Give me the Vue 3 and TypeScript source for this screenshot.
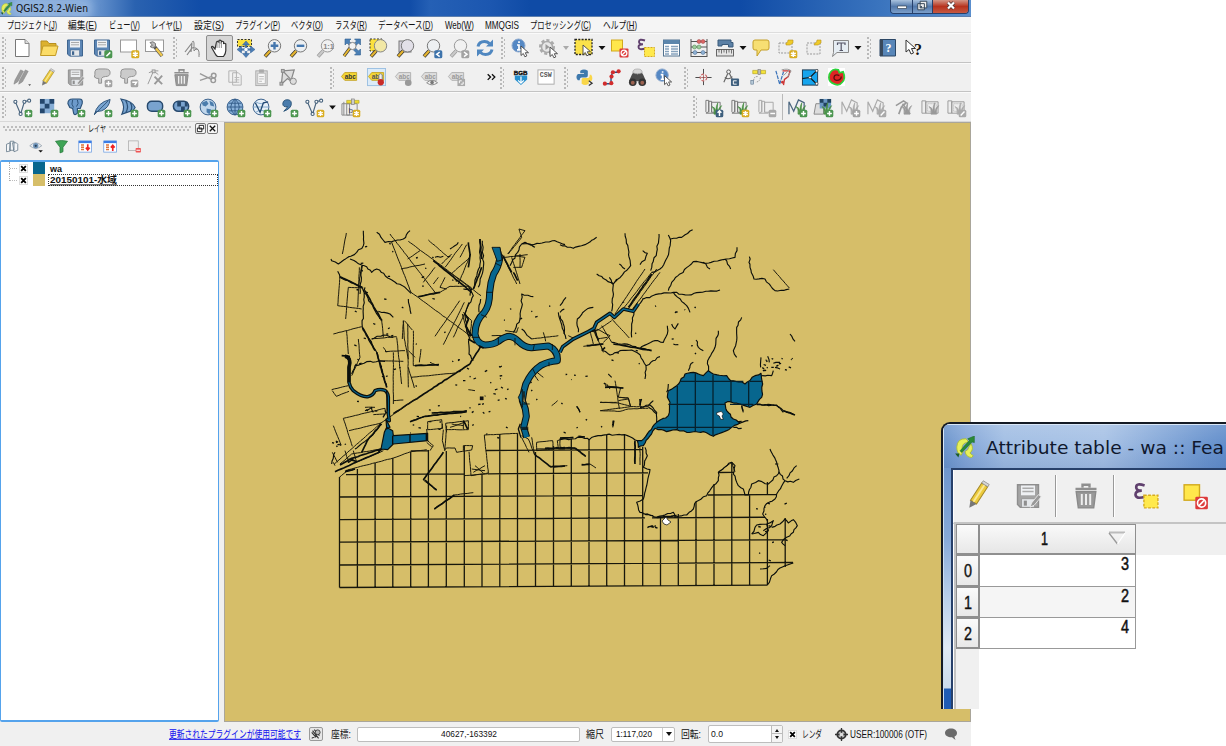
<script setup lang="ts">
import { h } from 'vue'

interface FitProps { text: string; w: number; size?: number; bold?: boolean; color?: string; family?: string; underline?: boolean; hgt?: number; mnemonic?: boolean; heavy?: number }

const UI = "'Liberation Sans', 'Noto Sans CJK JP', sans-serif"

/* Text condensed or expanded to a given width; a mnemonic is underlined inside the closing brackets. */
const Fit = (p: FitProps) => {
  const size = p.size ?? 11
  const hgt = p.hgt ?? 14
  const base = hgt / 2 + size * 0.36
  return h('svg', { width: p.w, height: hgt, style: 'display:block;overflow:visible;flex:none' }, [
    h('text', {
      x: 0, y: base, 'font-size': size, 'font-family': p.family ?? UI,
      'font-weight': p.bold ? 700 : 400, fill: p.color ?? '#111', textLength: p.w,
      stroke: p.heavy ? p.color ?? '#111' : undefined, 'stroke-width': p.heavy,
      lengthAdjust: 'spacingAndGlyphs', 'text-decoration': p.underline ? 'underline' : undefined,
    }, p.text),
    p.mnemonic ? h('path', { d: `M${p.w - 8.5} ${base + 1.5}h6`, stroke: '#111', 'stroke-width': 0.9 }) : null,
  ])
}
Fit.props = {
  text: String, w: Number, size: Number, bold: Boolean, color: String, family: String,
  underline: Boolean, hgt: Number, mnemonic: Boolean, heavy: Number,
}

const menus: [string, number][] = [
  ['プロジェクト(J)', 50], ['編集(E)', 29], ['ビュー(V)', 31], ['レイヤ(L)', 31], ['設定(S)', 30],
  ['プラグイン(P)', 45], ['ベクタ(O)', 32], ['ラスタ(R)', 32], ['データベース(D)', 55], ['Web(W)', 29],
  ['MMQGIS', 34], ['プロセッシング(C)', 61], ['ヘルプ(H)', 34],
]

const badge = (fill: string, mark: string) =>
  `<rect x="12.3" y="12.3" width="8" height="8" rx="1.6" fill="${fill}"/><path d="${mark}" stroke="#fff" stroke-width="1.5" fill="none"/>`
const plus = badge('#4c9650', 'M16.3 13.8v5M13.8 16.3h5')
const grayPlus = badge('#a3a3a3', 'M16.3 13.8v5M13.8 16.3h5')
const star = badge('#d9ad22', 'M16.3 13.6v5.4M13.9 15l4.8 2.7M18.7 15l-4.8 2.7')
const lens = (inner: string, handle = '#e5b42e', rim = '#777', fill = '#edf0f2') =>
  `<path d="M7 13L2 18.5" stroke="#333" stroke-width="3.6"/><path d="M7 13L2.2 18.2" stroke="${handle}" stroke-width="2.2"/><circle cx="11.5" cy="7.8" r="6.2" fill="${fill}" stroke="${rim}" stroke-width="1"/>${inner}`
const grayLens = (inner: string) => lens(inner, '#c9c9c9', '#999', '#f1f1f1').replace('#333', '#999')
const floppy = (c: string, d: string) =>
  `<path d="M2.5 2h15v16h-13l-2-2z" fill="${c}" stroke="${d}"/><rect x="5" y="2.5" width="10" height="7" fill="#eef0f3"/><path d="M6 4.5h8M6 6.8h8" stroke="#aaa"/><rect x="5.5" y="12" width="9" height="6" fill="#e4e7ea" stroke="${d}" stroke-width=".5"/><rect x="7" y="13.3" width="2.2" height="3.6" fill="${d}"/>`
const page = '<path d="M3.5 1.5h9.5l4 4V18.500h-13.500z" fill="#fff" stroke="#777"/><path d="M13 1.500v4h4" fill="#ddd" stroke="#777" stroke-width=".8"/>'
const vect = (c: string) =>
  `<path d="M2.500 4L8 17L12 4L17 2.500" fill="none" stroke="${c}" stroke-width="1.200"/><g fill="#fff" stroke="${c}" stroke-width="1.200"><circle cx="2.500" cy="4" r="1.600"/><circle cx="8" cy="16.800" r="1.600"/><circle cx="12" cy="4" r="1.600"/><circle cx="17" cy="2.800" r="1.600"/></g>`
const tag = (fill: string, edge: string, ink: string) =>
  `<path d="M1.500 9L5 4.800H17.500V13H5z" fill="${fill}" stroke="${edge}" stroke-width=".9"/><text x="5" y="11.300" font-size="6.800" font-weight="700" font-family="Liberation Sans" fill="${ink}">abc</text>`
const cursor = (x: number, y: number) => `<path transform="translate(${x} ${y})" d="M0 0v9.500l2.300-2 1.600 3.300 1.900-.9-1.500-3.200h3.200z" fill="#fff" stroke="#444" stroke-width=".9"/>`
const info = '<circle cx="7.500" cy="7.500" r="6.500" fill="#5588c4" stroke="#8eaace"/><path d="M8 3.300v1.800M6 7h2v4.500M6 11.800h4" stroke="#fff" stroke-width="1.700" fill="none"/>'
const hand = 'M6 11L3.800 8.600q-1.300-.6-1.300.8L6 15.500q1 2 2.500 3h6q2.300-3 2.300-6V6q-1.500-1.500-2.200 0V4q-1.400-1.500-2.300 0V2.800q-1.500-1.500-2.400 0V4q-1.500-1.500-2.400.2z'
const flow = (c: string) => `<path d="M2 4q0-3 4-3h7q5 0 5 4t-5 4q-3 0-4 2v5H6v-5H4q-4-1-2-4z" fill="${c}" stroke="#8f8f8f"/>`
const globe = (inner: string, fill: string) =>
  `<circle cx="9.500" cy="9.500" r="8.300" fill="${fill}" stroke="#315b88"/>${inner}`
const meridians = '<path d="M1.500 9.500h16M3 5.500h13M3 13.500h13M9.500 1v17M9.500 1q-9 8.500 0 17M9.500 1q9 8.500 0 17" fill="none" stroke="#315b88" stroke-width="1"/>'
const grassMap = '<path d="M2 2.500h3v12q-3 2-3 0zM5 15V3.500h3V15M8 15V4.500h9V15z" fill="#efefef" stroke="#777"/><path d="M2 16h10" stroke="#777"/>'
const grass = (c: string) => `<path d="M10.500 17q1-5-2-8q4 1 4 6q0-7 2-10q-1 6 0 10q1-5 4-7q-3 4-2 9z" fill="${c}" stroke="${c}" stroke-width=".7"/>`

const icons: Record<string, string> = {
  new: page,
  open: '<path d="M2 17V3h6l2 2.500h7V9" fill="#dcb12f" stroke="#b89020"/><path d="M1.500 17.500L4 8h15l-2.500 9.500z" fill="#fbdc68" stroke="#c29a26"/>',
  save: floppy('#5c86b5', '#3f658f'),
  saveas: floppy('#5c86b5', '#3f658f') + badge('#4c9650', 'M14.400 18.300L18.300 14.400'),
  compose: '<rect x="1.500" y="2" width="16" height="12" fill="#fff" stroke="#999"/>' + star,
  composer: '<rect x=".5" y="2" width="18" height="11.500" fill="#fff" stroke="#999"/><path d="M9 8l8 10" stroke="#555" stroke-width="3.600"/><path d="M11 10.500l6 7.300" stroke="#f0c84d" stroke-width="2.300"/><path d="M5 4.500q3-2 5.500 1v3q-3 2.500-5.500 0l2.500-1.200z" fill="#bbb" stroke="#777"/>',
  touch: '<path d="M2 14L9 5l-1 9M4 17l5-7q3-1 5 1l2 6" fill="none" stroke="#888" stroke-width="1.200"/><path d="M9 4q2-2 2 1v8l2-2q3 0 3 3v5" fill="#eee" stroke="#888"/>',
  pan: `<path d="${hand}" fill="#fff" stroke="#333" stroke-width="1.200"/><path d="M8 4v6M10.200 3v7M12.400 4v6" stroke="#777" stroke-width=".8"/>`,
  pansel: '<path d="M1.500 1.500h14v7h-14z" fill="#fbe13c" stroke="#333" stroke-dasharray="2 1.500"/><g fill="#4b7db5" stroke="#2f5f94" stroke-width=".5"><path d="M10 3l3.500 4h-7zM10 19.500l3.500-4h-7zM1 11.500l4.500-3.500v7zM19 11.500l-4.500-3.500v7z"/><path d="M9.200 7h1.600v8.500H9.200zM5.500 10.700h9v1.600h-9z"/></g><circle cx="10" cy="11.500" r="1.700" fill="#fff"/>',
  zin: lens('<path d="M11.500 4v7.600M7.700 7.800h7.600" stroke="#4477ae" stroke-width="2.400"/>'),
  zout: lens('<path d="M7.700 7.800h7.600" stroke="#4477ae" stroke-width="2.400"/>'),
  z11: grayLens('<text x="7.200" y="10.500" font-size="7.500" font-weight="700" font-family="Liberation Sans" fill="#888">1:1</text>'),
  zfull: '<g fill="#4a7fb5" stroke="#2f5f90" stroke-width=".6"><path d="M3 1h6L7 3l3 3-2 2-3-3-2 2zM18.500 1h-6l2 2-3 3 2 2 3-3 2 2zM18.500 17v-6l-2 2-3-3-2 2 3 3-2 2z"/></g><path d="M8 10l-6 8" stroke="#333" stroke-width="3.200"/><path d="M8 10l-6 8" stroke="#e6b832" stroke-width="2"/><circle cx="10.500" cy="8" r="3.600" fill="#f4f4f4" stroke="#888"/>',
  zsel: '<rect x="1" y="1" width="12" height="12" fill="#fbe13c" stroke="#333" stroke-dasharray="2 1.500"/>' + lens('', '#e5b42e', '#888', '#f2e8a5'),
  zlay: '<rect x="3" y="3" width="12" height="11" fill="#d6d3dd" stroke="#777"/>' + lens('', '#e5b42e', '#777', '#e2e0e8'),
  zprev: lens('') + badge('#3d73ab', 'M17.700 14l-3 2.300 3 2.300'),
  znext: grayLens('') + badge('#a3a3a3', 'M15 14l3 2.300-3 2.300'),
  refresh: '<path d="M3 8.500q1-5 6.500-5 3 0 5 2M17 11.500q-1 5-6.500 5-3 0-5-2" fill="none" stroke="#4f87c0" stroke-width="3"/><path d="M18 1.500v7h-7zM2 18.500v-7h7z" fill="#4f87c0"/>',
  ident: info + cursor(10, 8),
  action: '<circle cx="9" cy="9" r="6" fill="none" stroke="#aaa" stroke-width="4" stroke-dasharray="2.700 1.800"/><circle cx="9" cy="9" r="5.500" fill="#e7e7e7" stroke="#aaa" stroke-width="1.500"/><path d="M7.500 6l4 3-4 3z" fill="#999"/>' + cursor(12, 9),
  select: '<rect x="1" y="1.500" width="17" height="15" fill="#fbe24a" stroke="#222" stroke-width="1.300" stroke-dasharray="2 1.300"/>' + cursor(9, 7),
  desel: '<rect x="1.500" y="2" width="11" height="11" fill="#ffe74b" stroke="#d2a91d"/><rect x="9.500" y="10.500" width="9" height="9" rx="1" fill="#dd3b3b"/><circle cx="14" cy="15" r="2.900" fill="none" stroke="#fff" stroke-width="1.200"/><path d="M12 17l4-4" stroke="#fff" stroke-width="1.200"/>',
  expr: '<path d="M9 2.500q-6-2-6 1.200 0 2.500 4 2.500Q2.500 6.200 2.500 9q0 3.500 7 1.500" fill="none" stroke="#60406e" stroke-width="1.900"/><rect x="8.500" y="9.500" width="10" height="9" fill="#ffe94c" stroke="#d5aa20" stroke-dasharray="2 1"/>',
  table: '<rect x="1.500" y="2" width="16" height="16" fill="#fff" stroke="#52728f"/><path d="M1.500 2h16v4h-16z" fill="#5c86ac"/><path d="M3 8.500h4M9 8.500h7M3 11h4M9 11h7M3 13.500h4M9 13.500h7M3 16h4M9 16h7" stroke="#87a3bd" stroke-width="1.300"/>',
  abacus: '<path d="M2 1v18M18 1v18M2 18.500h16M2 3.500h16M2 9h16M2 14.500h16" stroke="#555"/><g fill="#d66" stroke="#944" stroke-width=".5"><circle cx="10" cy="3.500" r="2"/><circle cx="14" cy="3.500" r="2"/></g><g fill="#9ccc9c" stroke="#4a804a" stroke-width=".5"><circle cx="5.500" cy="9" r="2"/><circle cx="10" cy="9" r="2"/></g><g fill="#8fb1d4" stroke="#46688c" stroke-width=".5"><circle cx="6" cy="14.500" r="2"/><circle cx="14" cy="14.500" r="2"/></g>',
  measure: '<path d="M3 2h13v2.500h2V9h-4.500V6.500H7V8H3z" fill="#5b80a5" stroke="#3a5a7a"/><rect x="1.500" y="11.500" width="17" height="6.500" fill="#e4e4e4" stroke="#666"/><path d="M4 11.500v3M6.500 11.500v4M9 11.500v3M11.500 11.500v4M14 11.500v3M16.500 11.500v4" stroke="#555" stroke-width=".8"/>',
  tip: '<path d="M4 2h12q2 0 2 2v6q0 2-2 2h-6l-4 6v-6H4q-2 0-2-2V4q0-2 2-2z" fill="#f7df73" stroke="#c5a02a"/>',
  bmnew: '<path d="M2 5h13v10H2z" fill="#eee" stroke="#999" stroke-dasharray="2 1.200"/><path d="M9 5q2 0 2-3h5v3l-3 2-4 0z" fill="#efcb28" stroke="#b9921c" stroke-width=".6"/>' + star,
  bm: '<path d="M3 5h13v11H3z" fill="#eee" stroke="#999" stroke-dasharray="2 1.200"/><path d="M11 5q2 0 2-3h4v3l-3 2-4 0z" fill="#efcb28" stroke="#b9921c" stroke-width=".6"/>',
  text: '<path d="M3.500 2.500h15v12H7l-4.500 4 1-4z" fill="#e6edf3" stroke="#888"/><path d="M7.500 7V5h7.500v2M11.200 5v7.500M9.500 12.500h3.500" fill="none" stroke="#556" stroke-width="1.200"/>',
  help: '<path d="M2 1.500h15.500v16.500H2z" fill="#5886b8" stroke="#2b4766"/><path d="M2 1.500h3v16.500H2z" fill="#38495c"/><text x="7.500" y="13.500" font-size="12" font-weight="700" font-family="Liberation Serif" fill="#fff">?</text>',
  whats: '<path d="M2 2v12l3-2.500 2 4.500 2.500-1-2-4.500h4z" fill="#fff" stroke="#333"/><text x="10" y="16.500" font-size="16" font-weight="700" font-family="Liberation Serif" fill="#111">?</text>',
  pencils: '<g fill="#9a9a9a" stroke="#858585" stroke-width=".6"><path d="M1 17l1-4L8 2l3 1.500-6 11zM6 17l1-4 6-11 3 1.500-6 11z"/></g><path d="M16 17h3l-1.500 2z" fill="#555"/>',
  pencil: '<path d="M4 13.500L11.500 2l4 2.500L8 16z" fill="#edcb3c" stroke="#a58a28" stroke-width=".7"/><path d="M6 14.500l7.500-11.500" stroke="#f9e896" stroke-width="1.300"/><path d="M11.500 2l1-1.500 4 2.500-1 1.500z" fill="#d6d6d6" stroke="#888" stroke-width=".5"/><path d="M4 13.500l-.8 5L8 16z" fill="#777"/>',
  savee: floppy('#a4a4a4', '#8e8e8e') + '<path d="M11.500 18l1-3 5-6 2 1.500-5 6z" fill="#999" stroke="#f0f0f0" stroke-width=".6"/>',
  addf: flow('#cbcbcb') + grayPlus, movef: flow('#cbcbcb') + badge('#a3a3a3', 'M14 15h4.500l-2 3'),
  node: '<path d="M2 17L8 3h5M3 5l5-2 5 4" fill="none" stroke="#999"/><path d="M9 9l8 8M17 8l-8 9" stroke="#999" stroke-width="2"/><rect x="6.500" y="2" width="3" height="3" fill="#ddd" stroke="#999"/>',
  trash: '<path d="M3 7h14l-1.500 11.500h-11z" fill="#999" stroke="#8a8a8a"/><path d="M2.500 5h15M7.500 4V2h5v2" fill="none" stroke="#8f8f8f" stroke-width="1.700"/><path d="M7 8.500v8M10 8.500v8M13 8.500v8" stroke="#eee" stroke-width="1.400"/>',
  cut: '<path d="M1 6l12 6M1 13l12-4" stroke="#999" stroke-width="1.400"/><circle cx="15.500" cy="8" r="2.400" fill="none" stroke="#999" stroke-width="1.500"/><circle cx="15" cy="13" r="2.400" fill="none" stroke="#999" stroke-width="1.500"/>',
  copy: '<g fill="#f1f1f1" stroke="#b0b0b0"><path d="M3 3h8v12H3zM7 5h6l3 3v10H7z"/></g><path d="M9 10h5M9 12.500h5M9 15h5" stroke="#bbb"/>',
  paste: '<rect x="4" y="3" width="12" height="15.500" fill="#ddd" stroke="#aaa"/><rect x="6" y="5.500" width="8" height="11" fill="#f7f7f7" stroke="#bbb"/><rect x="7.500" y="1.500" width="5" height="3.500" fill="#aaa"/><path d="M7.500 9h5M7.500 11.500h5M7.500 14h3" stroke="#bbb"/>',
  nodes: '<path d="M2.500 17L4 3l13 14-8-6zM4 3l12-1-3 10" fill="#ddd" stroke="#888" stroke-width="1.300"/><circle cx="15" cy="14" r="3.300" fill="#ddd" stroke="#888"/><rect x="2.500" y="1.500" width="3" height="3" fill="#bbb" stroke="#888"/><rect x="1" y="15" width="3" height="3" fill="#bbb" stroke="#888"/>',
  abc: tag('#f4d735', '#c3a01f', '#333'),
  abcp: '<rect x=".5" y=".5" width="19" height="18" fill="#dcebf8" stroke="#9bbfe2"/>' + tag('#f4d735', '#c3a01f', '#555') + '<path d="M12.500 14V7q2-2 3.500 0v6" fill="#eee" stroke="#888" stroke-width="1"/><circle cx="14.500" cy="15" r="3.300" fill="#c92b28"/>',
  abcg: tag('#dedede', '#aaa', '#999') + '<circle cx="15" cy="15.500" r="3.500" fill="#999"/>',
  abce: tag('#dedede', '#aaa', '#999') + '<path d="M7 15.500q5.500-5 11.500 0-6 4.500-11.500 0z" fill="#eee" stroke="#888"/><circle cx="12.700" cy="15.300" r="1.900" fill="#777"/>',
  abcm: tag('#dedede', '#aaa', '#999') + '<rect x="11" y="11.500" width="8" height="7.500" fill="#aaa"/><path d="M13 16v-2.500h2.500M17 14.500V17h-2.500" stroke="#fff" fill="none"/>',
  more: '<path d="M6 6.500l3 3-3 3M10.500 6.500l3 3-3 3" fill="none" stroke="#111" stroke-width="1.400"/>',
  ogr: '<text x="3" y="7" font-size="6.500" font-weight="700" font-family="Liberation Sans" fill="#111" stroke="#111" stroke-width=".4">BGB</text><path d="M4 8h13v4l-6.500 6L4 12z" fill="#2790ce"/><path d="M10.500 9v7M7.500 13l3 3 3-3" stroke="#fff" stroke-width="1.300" fill="none"/>',
  csw: '<rect x="1" y="2" width="17" height="15" fill="#fff" stroke="#aaa"/><text x="3" y="9.500" font-size="7" font-family="Liberation Mono" font-weight="700" fill="#555">CSW</text>',
  py: '<path d="M5.500 5.500V3q4-3 8 0v5q0 2-2 2H7q-2 0-2 3H3Q0 9.500 3 6.300h6.500V5.500z" fill="#3e79ad"/><path d="M14.500 14v2.500q-4 3-7.500 0V12q0-1.500 2-1.500h4.500q2 0 2-3.500H17q2.500 4 0 7z" fill="#f9d649"/><path d="M14.500 13.500l3.500 2.500-3.500 2.500" fill="none" stroke="#333" stroke-width="1.300"/>',
  redpath: '<path d="M3.500 16.500h6V10l1.500-5.500h7" fill="none" stroke="#2f4f84" stroke-width="1.500"/><g fill="#d22c2c"><circle cx="3" cy="16.500" r="2.200"/><circle cx="9.800" cy="16" r="2.200"/><circle cx="10" cy="9" r="2.200"/><circle cx="11.500" cy="4.500" r="2.200"/><circle cx="17.500" cy="3.500" r="2.200"/></g>',
  binoc: '<path d="M4 7l2-3h3l1 3 1-3h3l2 3 3 7H1z" fill="#4c4c4c"/><path d="M5 5q0-4 5-4t5 4l-3 1H8z" fill="#d5d5d5" stroke="#999" stroke-width=".6"/><circle cx="5" cy="15" r="4" fill="#333"/><circle cx="15" cy="15" r="4" fill="#333"/><circle cx="5" cy="15.500" r="2" fill="#9c6250"/><circle cx="15" cy="15.500" r="2" fill="#9c6250"/>',
  cross: '<path d="M10 1v17M1.500 10h17" stroke="#444"/><circle cx="10" cy="10" r="3.500" fill="#f0f0f0" stroke="#c66" stroke-width="1.200" stroke-dasharray="3 1.500"/><path d="M10 7.500v5M7.500 10h5" stroke="#833" stroke-width=".7"/>',
  divider: '<circle cx="8" cy="4" r="2" fill="none" stroke="#555"/><path d="M7 6L3 15M9 6l3 6M4 10q4 3 8-1" fill="none" stroke="#666" stroke-width="1.200"/><rect x="10.500" y="11" width="8.500" height="8" rx="1" fill="#3e5f7d"/><path d="M16.500 13.500h-3.500v3.500h3.500" fill="none" stroke="#fff"/>',
  sat: '<path d="M5 2.500h5v3.500H5zM13.500 2.500h5v3.500h-5z" fill="#f3e23a" stroke="#b6a51e" stroke-width=".7"/><rect x="10.500" y="1.500" width="2.600" height="5.500" fill="#bbb" stroke="#777" stroke-width=".6"/><path d="M10 9q-4 0-4 4M13 10q0 4-5 5" fill="none" stroke="#888" stroke-dasharray="1.500 1"/><rect x="3" y="13" width="3" height="4" fill="#b9cbd9" stroke="#56708a" stroke-width=".6"/>',
  topo: '<path d="M2 3l4 14M6 17l4-13" stroke="#3c74ba" stroke-width="1.300" stroke-dasharray="4 1"/><path d="M9 3h8l-2 6-4 3-1 6" fill="none" stroke="#c33" stroke-width="1.400"/><path d="M8 2q7-2 10 1l-4 7M10 8l6-6" fill="none" stroke="#999"/><circle cx="9" cy="15" r="1.500" fill="#c33"/>',
  bluegeo: '<rect x="1.500" y="2" width="16" height="16" fill="#16a5ee" stroke="#1d3a50"/><path d="M1.500 11l8-1 8-8M9.500 10l7 7" fill="none" stroke="#111" stroke-width="1.200"/><g fill="#fff" stroke="#222" stroke-width=".6"><circle cx="9.500" cy="10" r="1.400"/><circle cx="16.500" cy="3" r="1.400"/><circle cx="16.500" cy="16.500" r="1.400"/></g>',
  spiral: '<rect x="1" y="0" width="18" height="19" fill="#fff"/><path d="M4 4q3-4 8-2l1 3 4-1q3 7-1 11-3 4-8 2-6-2-6-7 0-4 2-6z" fill="#e02524" stroke="#2bd33a" stroke-width="1.800"/><path d="M13 8q-3-1.500-5 0-2 4 2 5 5 0 5-4" fill="none" stroke="#5a1010" stroke-width="1.400"/>',
  vect: vect('#49647e') + plus, newvect: vect('#49647e') + star,
  raster: '<rect x="1" y="1" width="15" height="15" fill="#86add5"/><path d="M1 1h5v5H1zM11 1h5v5h-5zM6 6h5v5H6zM1 11h5v5H1z" fill="#24476d"/>' + plus,
  pg: '<path d="M2 6q0-5 5-5h7q4 0 3 5l-2 5h-3v5q-3 3-4 0l-1-5-3-1z" fill="#6d9acb" stroke="#2b5178" stroke-width="1.200"/><path d="M7 2q-2 5 1 8M12 2q2 4-1 7" fill="none" stroke="#2b5178"/>' + plus,
  feather: '<path d="M1.500 17.500Q4 5 18 1.500q-1 9-9 12l-6 1z" fill="#78a4d0" stroke="#2b5178"/><path d="M1.500 17.500L16 3" stroke="#2b5178" stroke-width=".9"/>' + plus,
  mssql: '<path d="M2 1q12 2 15 9l-2 3-12 4q4-8-1-16z" fill="#78a4d0" stroke="#2b5178" stroke-width="1.200"/><path d="M7 2.500q4 7 0 13M12 5q3 5 0 9" fill="none" stroke="#2b5178" stroke-width="1.300"/>' + plus,
  ora: '<rect x="1.500" y="3.500" width="16" height="10.500" rx="4.500" fill="#79a3cf" stroke="#27496d" stroke-width="1.500"/>' + plus,
  ora2: '<rect x="1.500" y="3.500" width="16" height="10.500" rx="5" fill="#79a3cf" stroke="#27496d" stroke-width="1.600"/><path d="M5.500 4h4v5h-4zM9.500 9h4v5h-4zM13.500 4h3v5h-3z" fill="#27496d"/>' + plus,
  wms: globe('<path d="M3 5l5-2 2 3-3 3-3-1zM11 3l4 2 1 4-4-1zM8 11l5 1-2 5-3-2zM3 11l3 3z" fill="#4a7cac"/>', '#c1d7ec') + plus,
  wcs: globe(meridians, '#8ab2da') + plus,
  wfs: globe('<path d="M1.500 9.500h16M4 4q6 4 11 0M4 15q6-4 11 0" fill="none" stroke="#7fa6cc"/><path d="M3.500 5l5 10 3.500-10 5-1" stroke="#234a73" stroke-width="1.400" fill="none"/>', '#e7f0f8') + plus,
  comma: '<path d="M7 2q6-1 6 4 0 5-8 8 4-4 4-5-5 1-5-3 0-3 3-4z" fill="#4a7cac" stroke="#2c5579"/>' + plus,
  csv: '<path d="M1 6h8v12H1zM3 4v14M6 6h11v12H6z" fill="#eee" stroke="#888"/><text x="8" y="15.500" font-size="8.500" font-family="Liberation Sans" fill="#446">b</text><path d="M6 2.500h13v3H6z" fill="#eedc2f" stroke="#aa9b20" stroke-width=".6"/><rect x="11" y="1" width="3" height="6" fill="#ccc" stroke="#777" stroke-width=".6"/>' + star,
  g1: grassMap + grass('#4a9045') + badge('#3e5f7d', 'M16.300 19v-5M14.300 15.500l2-2 2 2'),
  g2: grassMap + grass('#4a9045') + star,
  g3: `<g opacity=".6">${grassMap}</g>` + badge('#aaa', 'M14 16.300h5'),
  g4: '<path d="M1 17V4l5 10L11 2l6 3v11" fill="none" stroke="#49647e" stroke-width="1.300"/>' + grass('#4a9045') + plus,
  g5: '<path d="M2 6h8v11H0z" fill="#ddd" stroke="#888"/><rect x="6" y="1" width="12" height="10" fill="#6c98c4"/><path d="M6 1h4v4H6zM14 1h4v4h-4zM10 5h4v4h-4z" fill="#21425f"/>' + grass('#4a9045') + plus,
  g6: '<path d="M1 17V4l5 10L11 2l6 3v11" fill="none" stroke="#aaa" stroke-width="1.200"/>' + grass('#aaa') + grayPlus,
  g7: '<path d="M1 17V4l5 10L11 2l6 3v11" fill="none" stroke="#aaa" stroke-width="1.200"/>' + grass('#aaa') + badge('#aaa', 'M14.400 18.300l4-4'),
  g8: '<path d="M2 8l8-5 3 2-5 4M9 6l8 11M8 9l-3 8" fill="none" stroke="#999" stroke-width="1.700"/>' + grass('#999'),
  g9: '<path d="M1 3h4v13H1zM5 4h13v12H5z" fill="#eee" stroke="#999"/><path d="M7 6h9v8H7z" fill="none" stroke="#aaa" stroke-dasharray="1 1"/>' + grass('#999'),
  g10: '<path d="M1 3h4v13H1zM5 4h13v12H5z" fill="#eee" stroke="#999"/><path d="M7 6h9v8H7z" fill="none" stroke="#aaa" stroke-dasharray="1 1"/>' + grass('#aaa') + badge('#aaa', 'M14.400 18.300l4-4'),
  tri: '<path d="M6.500 8h7l-3.500 4z" fill="#111"/>',
  trig: '<path d="M7 8h6l-3 4z" fill="#aaa"/>',
  group: '<path d="M2 7l5-2v11l-5 1zM7 3l5 0v12H6zM10 5h5l2 2v8l-5 2z" fill="#f4f6f8" stroke="#5c7183"/>',
  eye: '<path d="M1 9q8-8 16 0-8 7-16 0z" fill="#e8edf1" stroke="#8d9aa5"/><circle cx="9" cy="9" r="3.600" fill="#6f93b8"/><circle cx="9" cy="9" r="1.500" fill="#29425a"/><path d="M12.500 15h6l-3 3z" fill="#111"/>',
  filter: '<path d="M2 3q8-2 16 0l-6 8v6l-4 1.500V11z" fill="#3fa456" stroke="#2a7a3e"/>',
  expand: '<rect x="1" y="2.500" width="17" height="15" fill="#fff" stroke="#6b9be0"/><path d="M1 2.500h17v3H1z" fill="#3b7de6"/><path d="M4 8h4M4 11h4M4 14h4" stroke="#e0753a" stroke-width="2"/><path d="M13 7v6M10.500 11.500l2.500 3 2.500-3" stroke="#e22" stroke-width="2.200" fill="none"/>',
  collapse: '<rect x="1" y="2.500" width="17" height="15" fill="#fff" stroke="#6b9be0"/><path d="M1 2.500h17v3H1z" fill="#3b7de6"/><path d="M4 8h4M4 11h4M4 14h4" stroke="#e0753a" stroke-width="2"/><path d="M13 16v-6M10.500 11.500l2.500-3 2.500 3" stroke="#e22" stroke-width="2.200" fill="none"/>',
  remove: '<rect x="2" y="2.500" width="13" height="13" fill="#efefef" stroke="#aaa"/><rect x="11.500" y="12" width="7" height="6" rx="1" fill="#e55"/><path d="M12.500 15h5" stroke="#fff" stroke-width="1.400"/>',
}

const logo = '<path d="M11 2.500Q3 2 2.500 10q0 6 4 7.500l2-4Q6 10 9 7l4-2z" fill="#e8f05a" stroke="#a9bd34" stroke-width=".8"/><path d="M15.500 7q3 5-1 8.500l3 2.500-1.500 1.500q-5 0-6-5.500 3-1 3.500-4z" fill="#e8f05a" stroke="#a9bd34" stroke-width=".8"/><path d="M18.500 0v6l-2-.5L7 15l-1.500-1.500L14 4l-1.500-1.500z" fill="#2b8a37" stroke="#1c6b29" stroke-width=".5"/><path d="M1 16h4l-1 3.500z" fill="#1c5c28"/>'

const bars: { cls: string; groups: { cls: string; items: string[] }[] }[] = [
  { cls: 'bar1', groups: [
    { cls: 'a', items: ['new', 'open', 'save', 'saveas', 'compose', 'composer'] },
    { cls: 'b', items: ['touch', 'pan', 'pansel', 'zin', 'zout', 'z11', 'zfull', 'zsel', 'zlay', 'zprev', 'znext', 'refresh'] },
    { cls: 'c', items: ['ident', 'action', 'trig', 'select', 'tri', 'desel', 'expr', 'table', 'abacus', 'measure', 'tri', 'tip', 'bmnew', 'bm', 'text', 'tri'] },
    { cls: 'd', items: ['help', 'whats'] },
  ] },
  { cls: 'bar2', groups: [
    { cls: 'a', items: ['pencils', 'pencil', 'savee', 'addf', 'movef', 'node', 'trash', 'cut', 'copy', 'paste', 'nodes'] },
    { cls: 'b', items: ['abc', 'abcp', 'abcg', 'abce', 'abcm'] },
    { cls: 'm', items: ['more'] },
    { cls: 'c', items: ['ogr', 'csw'] },
    { cls: 'd', items: ['py', 'redpath', 'binoc', 'ident'] },
    { cls: 'e', items: ['cross', 'divider', 'sat', 'topo', 'bluegeo', 'spiral'] },
  ] },
  { cls: 'bar3', groups: [
    { cls: 'a', items: ['vect', 'raster', 'pg', 'feather', 'mssql', 'ora', 'ora2', 'wms', 'wcs', 'wfs', 'comma', 'newvect', 'tri', 'csv'] },
    { cls: 'b', items: ['g1', 'g2', 'g3', 'sep', 'g4', 'g5', 'g6', 'g7', 'g8', 'g9', 'g10'] },
  ] },
]
const layerTools = ['group', 'eye', 'filter', 'expand', 'collapse', 'remove']

/* ---- map ---- */
let seed = 7
const rnd = () => (seed = (seed * 16807) % 2147483647) / 2147483647

/* Subdivides a line into short steps and shifts them a little, like surveyed streams. */
const rough = (s: string, amp: number) => {
  const p = s.split(' ').map(t => t.split(',').map(Number))
  let d = `M${p[0][0]} ${p[0][1]}`
  for (let i = 1; i < p.length; i++) {
    const [x0, y0] = p[i - 1], [x1, y1] = p[i]
    const n = amp ? Math.max(1, Math.round(Math.hypot(x1 - x0, y1 - y0) / 9)) : 1
    for (let k = 1; k <= n; k++) {
      const j = k < n ? amp : 0
      d += `L${(x0 + (x1 - x0) * k / n + (rnd() - .5) * 2 * j).toFixed(1)} ${(y0 + (y1 - y0) * k / n + (rnd() - .5) * 2 * j).toFixed(1)}`
    }
  }
  return d
}

interface Sheet { tx: number; ty: number; thin: string[]; wavy: string[]; bold: string[] }
const sheets: Sheet[] = [
  { tx: 325, ty: 225,
    thin: [
      '195,30 330,205', '200,55 258,205', '250,52 440,192', '310,48 370,100', '325,110 468,215', '285,80 248,105', '300,120 228,135', '330,130 295,175', '380,90 350,120', '412,60 360,130', '425,62 405,100', '437,90 400,180', '435,100 378,150', '345,205 375,187 430,187', '340,160 325,180', '360,160 345,190 365,195', '258,205 435,335', '404,230 330,337', '418,235 355,362', '432,240 385,340', '45,158 38,245 110,255', '70,190 62,285', '70,190 115,192', '103,130 98,250', '25,330 110,308', '65,320 70,390', '100,345 105,400 80,455', '140,345 215,338', '175,340 170,285', '235,290 238,345 250,405', '265,320 265,425 342,422', '248,300 250,490', '258,460 390,447', '215,340 230,480', '205,385 205,540', '180,383 240,380', '165,410 235,412', '20,497 70,485', '22,500 34,517 72,502', '120,550 150,550', '64,27 52,90', '530,90 575,180', '540,100 608,92', '560,100 585,180', '550,90 590,40 582,15 600,20 548,90', '570,95 600,100 590,130 565,130', '585,90 585,130', '335,205 280,218', '620,345 700,335', '655,325 662,352', '500,335 548,335', '540,320 575,325 580,310', '288,375 283,415', '412,270 430,335 440,332', '415,265 440,290 435,340', '315,415 340,425', '430,497 450,500', '620,440 640,470', '630,440 655,460', '250,380 270,400', '100,190 110,125',
      '235,290 232,345', '238,290 262,318', '250,430 268,492', '205,530 235,528', '175,370 185,385',
    ],
    wavy: [
      '115,20 115,65 95,85 40,120 20,110 18,105', '75,105 95,115 125,128 140,145 155,135 195,165 240,190 258,208', '155,25 180,55 235,45 255,20', '38,142 45,160 110,190 165,285', '112,125 105,210', '120,190 112,310', '112,310 155,385 185,490', '140,345 175,333 205,340', '80,450 90,425 125,413 180,412', '250,225 258,270', '160,262 195,270 205,280', '432,235 420,270 425,320 435,345', '432,345 432,390 445,410', '465,45 465,120 445,195', '472,50 475,130 460,190', '590,60 625,62 690,50 720,62', '585,285 590,250 590,210 625,218', '585,285 565,325', '705,265 718,255', '590,315 620,345', '330,100 355,97', '415,195 440,195 435,215', '630,70 600,55 590,60 555,125', '467,225 462,265', '700,265 718,330',
      '430,187 445,215 432,240', '375,75 400,55',
    ],
    bold: ['205,569 435,420', '435,420 468,365', '270,425 342,422', '45,158 112,190', '320,567 420,562', '325,110 440,205', '120,200 170,290', '50,395 75,398', '430,55 435,90 430,130', '465,45 470,105', '470,130 445,195', '280,218 345,205', '535,95 560,145', '565,145 578,170', '112,310 150,380', '155,385 185,490'],
  },
  { tx: 560, ty: 225,
    thin: ['255,135 165,270', '275,145 185,260', '290,135 205,255', '300,145 218,255', '155,285 208,342', '100,320 130,380', '110,315 150,335 130,355', '90,320 100,360', '70,367 130,360', '80,325 110,320', '125,305 155,355', '130,385 120,360', '155,290 110,320', '135,485 190,492', '165,470 178,555', '178,520 205,522 212,548', '120,535 175,537', '122,560 212,548 265,548', '140,480 150,495', '25,335 45,345', '112,345 142,340', '640,137 688,192', '182,490 175,520 205,522'],
    wavy: ['0,62 40,73 75,62 110,40', '195,28 205,75 212,125 160,180', '110,150 160,182 155,262', '178,120 195,135', '325,33 332,50 322,100 300,135 275,145', '297,30 290,85 272,140', '332,45 365,40 398,17', '248,80 262,88 255,108 240,122', '325,200 335,175 400,113 435,118 500,105 525,100 531,70', '430,115 450,135', '495,105 512,135', '250,225 285,212 340,205 385,213 420,205 480,198', '340,205 380,245 390,265', '220,262 250,222', '568,98 570,130 582,165 615,165 645,200 688,195', '222,265 215,300 215,340', '55,325 52,285 75,260 100,250', '0,245 10,230 18,220', '0,275 10,300 18,345', '155,355 210,363 240,373 265,378', '130,380 150,393 180,380 215,378 240,392 258,425 255,465', '258,425 300,398', '240,373 285,350 310,355 322,330 322,305', '475,320 465,370 443,410 445,445', '545,280 530,310 530,350 520,380 530,400', '408,348 415,370 430,380', '603,400 602,430', '623,397 628,415', '605,455 635,455 640,440', '645,430 660,435', '640,418 660,415', '335,300 345,315 355,298', '690,330 705,352', '520,590 545,592', '545,545 550,560', '590,540 650,545 670,565', '265,545 280,530', '265,548 290,570', '340,360 355,362', '385,440 390,425 400,415', '325,480 320,505', '145,450 155,460', '50,547 60,565', '148,160 160,180 170,165'],
    bold: ['205,250 275,150', '80,365 130,360', '135,490 165,490', '160,360 275,380', '125,380 135,370', '105,320 115,350', '80,325 110,318', '165,490 190,492'],
  },
  { tx: 325, ty: 400,
    thin: ['55,58 180,28 182,45 145,47', '55,58 82,142', '72,95 168,72', '25,80 48,138', '28,195 168,72 272,0', '45,195 80,165 168,150', '70,190 60,155', '95,190 85,155', '308,92 308,68 350,62 353,88 308,92', '365,100 362,73 430,65 430,92 362,92', '415,65 415,90', '380,75 415,80', '305,90 308,125 325,140 315,155', '355,92 352,125 360,155', '358,155 364,147 390,147 395,160 440,153 443,140 415,140 415,155', '432,158 438,230 490,222 478,108 580,103', '590,110 610,120 628,165', '590,115 612,160', '620,115 628,165', '635,130 683,125 685,150 635,155 635,130', '720,118 697,125 700,150 720,150', '305,130 320,143', '100,187 175,155', '22,160 38,190', '25,190 30,200', '43,235 70,212 205,177 257,158 305,152', '365,80 360,150', '352,75 350,90', '355,160 295,243 335,273', '685,205 720,200', '328,330 388,288 445,281', '255,68 300,52 425,38', '440,210 480,215', '450,200 475,222', '480,200 445,220', '375,85 420,70', '417,230 490,224', '635,150 720,148', '680,20 698,5'],
    wavy: ['180,35 195,60', '62,215 90,210', '120,35 140,25 145,40', '90,150 130,120 168,75', '70,190 85,180', '20,195 30,160'],
    bold: ['30,218 165,158', '45,198 80,178 168,150', '110,160 130,120 170,75', '355,160 295,243', '300,243 335,273', '328,330 388,288', '255,68 300,52', '300,52 425,38', '628,165 680,205', '60,218 90,210', '415,65 428,90', '160,158 185,140', '660,148 720,146', '70,180 95,188', '680,203 720,201'],
  },
  { tx: 560, ty: 400,
    thin: ['0,118 40,115', '0,147 45,148 77,173', '65,198 90,195 108,207', '0,202 22,200', '0,150 0,118', '225,130 225,190', '240,145 240,198', '475,220 515,190 525,218', '175,5 205,0 212,22 175,12', '120,10 170,10', '120,35 180,37 205,30 265,28'],
    wavy: ['0,122 35,120 65,115 88,122 105,112 140,107 195,107 232,125', '290,70 290,40 270,18 240,25', '255,145 262,170 250,205 270,212 262,250 250,300 230,310 240,340 290,355 340,340 345,355 380,348 400,330 408,308 440,290 460,260 475,245 475,220 515,190 525,200 520,225 535,260 550,270 555,288 565,288 575,255 595,245 625,255 650,230 657,215 650,190 630,150', '657,218 675,245 650,285 645,300 615,320 608,345 622,365', '675,245 700,250 718,240', '680,238 710,200', '575,405 590,378 620,375 625,395 610,410 595,400 575,405', '620,375 640,365 635,380 610,395', '635,385 660,375 675,360 685,372 700,362 712,380 700,400 680,415 665,430 675,440', '622,558 635,530 660,507 700,492', '590,17 650,18 670,35 700,45', '520,85 545,88', '530,75 565,65', '545,20 550,40', '600,510 620,508 630,500', '250,345 280,350', '162,65 158,85', '655,195 645,195', '50,22 60,40', '245,0 240,20'],
    bold: ['0,117 40,116', '55,112 75,114', '0,146 45,147', '45,147 77,172', '65,197 88,196', '225,125 225,195', '290,355 350,350', '670,35 705,48', '240,0 240,20', '160,65 158,80'],
  },
]
const drawn = sheets.map(s => ({
  t: `translate(${s.tx} ${s.ty}) scale(.33333)`,
  thin: s.thin.map(l => rough(l, .5)).join(''),
  wavy: s.wavy.map(l => rough(l, 2.2)).join(''),
  bold: s.bold.map(l => rough(l, .8)).join(''),
}))

const scatter = (n: number, x: number, y: number, w: number, hh: number) => {
  let d = ''
  for (let i = 0; i < n; i++) d += `M${(x + rnd() * w).toFixed(1)} ${(y + rnd() * hh).toFixed(1)}l${(rnd() * 2 + .6).toFixed(1)} ${(rnd() * 2.6 - 1.3).toFixed(1)}`
  return d
}
const specks = scatter(26, 340, 290, 110, 140) + scatter(16, 350, 235, 110, 60) + scatter(34, 445, 360, 75, 80)
  + scatter(14, 530, 375, 80, 60) + scatter(14, 610, 300, 90, 70) + scatter(16, 760, 358, 34, 14)
  + scatter(8, 390, 410, 60, 30) + scatter(12, 755, 500, 40, 75) + scatter(6, 495, 300, 70, 30) + scatter(8, 644, 527, 12, 2)
  + scatter(8, 330, 440, 25, 25)

/* Sea grid: [x, top, bottom] columns and [y, x1, x2] rows; rows rise slightly to the east. */
const cols: number[][] = [
  [339.5, 478, 588.500], [357.4, 470, 588], [375.1, 464, 588], [392.8, 459, 588], [410.700, 453, 588], [428.400, 451, 588],
  [446.300, 452, 588], [464.300, 447, 588], [482, 475, 588], [499.800, 435, 588], [517.500, 435, 588], [535.500, 453, 588],
  [553.500, 447, 587], [571.300, 440, 587], [589, 440, 587], [606.700, 436, 587], [624.500, 436, 587], [642.700, 448, 587],
  [660.500, 518, 587], [678.300, 515, 587], [696, 503, 587], [714, 485, 586], [731.800, 463, 586], [749.600, 496, 586],
  [767.400, 483, 496], [767.400, 520, 586], [785.200, 519, 568],
]
const rows: number[][] = [
  [452.300, 410.700, 428], [452.300, 486, 642], [475.600, 346, 464], [475.600, 488, 648], [475.600, 718, 734], [498, 339.500, 643], [498, 708, 776],
  [520.600, 339.500, 645], [520.600, 652, 765], [543.200, 339.500, 785], [566, 339.500, 793], [588.500, 339.500, 767.500],
]
const rise = (y: number, x: number) => y - (x - 340) * .0055
const grid = cols.map(c => `M${c[0]} ${c[1]}V${c[2]}`).join('') + rows.map(r => `M${r[1]} ${rise(r[0], r[1])}L${r[2]} ${rise(r[0], r[2])}`).join('')

const mainRiver = 'M515 72L524 105Q520 130 506 150Q496 175 494 205Q494 245 478 265Q450 290 450 330Q455 360 480 363Q505 362 520 352Q540 337 555 337Q570 340 580 352Q600 372 620 371L670 366Q700 380 697 410Q670 412 648 424Q625 440 612 462Q600 480 597 500L592 530L601 555L604 577L596 610L605 640'
const westRiver = 'M60 397Q80 400 72 430L72 475Q75 490 85 500Q110 520 128 518Q145 515 150 500Q165 494 180 499Q192 508 190 530L190 570L193 590L183 585'
const eastRiver = 'M0 385L8 368L40 345L85 323L102 313L110 295L150 268L163 280L190 255L220 262L235 240'
const lake = rough('325,500 350,485 375,450 400,445 430,455 445,440 460,450 500,455 512,470 545,473 555,480 585,455 603,448 608,480 605,520 590,540 570,550 540,540 510,533 495,537 500,560 520,585 540,597 500,620 460,637 430,623 380,625 350,617 320,623 285,613 250,665 235,670 232,650 245,650 290,595 325,575 330,535 322,520 325,500', 2)
const delta = 'M185 85L203 95L205 110L308 103L308 125L205 135L188 152L168 150L178 100zM183 60L195 85L185 90z'

const tableRows = [['0', '3'], ['1', '2'], ['2', '4']]
</script>

<template>
  <div class="page">
    <div class="main">
      <header class="title">
        <svg class="mini" viewBox="0 0 20 20" v-html="logo"></svg>
        <span class="glow"><Fit text="QGIS2.8.2-Wien" :w="72" :size="10.500" family="'DejaVu Sans', sans-serif" /></span>
        <span class="wbtns">
          <i class="wb"><svg viewBox="0 0 20 12"><path d="M5.500 6h9v2.500h-9z" fill="#fff" stroke="#345" stroke-width=".7" /></svg></i>
          <i class="wb mid"><svg viewBox="0 0 20 12"><path d="M7.500 1h7v7h-7zM5 3.500h7v6.500H5z" fill="#eee" stroke="#345" /><path d="M7.500 6h2v2h-2z" fill="#456" /></svg></i>
          <i class="wb close"><svg viewBox="0 0 30 12"><path d="M12 2.500l6 6M18 2.500l-6 6" stroke="#433" stroke-width="3.600" /><path d="M12 2.500l6 6M18 2.500l-6 6" stroke="#fff" stroke-width="2.200" /></svg></i>
        </span>
      </header>
      <nav class="menu"><Fit v-for="m in menus" :key="m[0]" :text="m[0]" :w="m[1]" :size="10.500" :mnemonic="m[0].endsWith(')')" /></nav>

      <div v-for="b in bars" :key="b.cls" class="bar" :class="b.cls">
        <div v-for="g in b.groups" :key="g.cls" class="grp" :class="'g-' + g.cls">
          <i v-if="g.cls !== 'm'" class="grip"></i>
          <span v-for="(n, k) in g.items" :key="k" class="slot" :class="'s-' + n">
            <svg v-if="n !== 'sep'" viewBox="0 0 20 20" v-html="icons[n]"></svg>
          </span>
        </div>
      </div>

      <div class="body">
        <aside class="dock">
          <div class="dhead">
            <i class="dots"></i><Fit text="レイヤ" :w="18" :size="9" :hgt="10" /><i class="dots"></i>
            <span class="dbtn"><svg viewBox="0 0 10 10"><path d="M3.500 1.500h5v4h-5zM1.500 4.500h5v4h-5z" fill="#fff" stroke="#111" /></svg></span>
            <span class="dbtn"><svg viewBox="0 0 10 10"><path d="M2 2l6 6M8 2l-6 6" stroke="#111" stroke-width="1.400" /></svg></span>
          </div>
          <div class="dtools"><svg v-for="n in layerTools" :key="n" viewBox="0 0 20 20" v-html="icons[n]"></svg></div>
          <div class="tree">
            <div class="lrow">
              <i class="branch"></i><svg class="chk" viewBox="0 0 9 9"><path d="M1.500 1.500l6 6M7.500 1.500l-6 6" stroke="#000" stroke-width="2.300" /></svg>
              <i class="sw blue"></i><span class="lname"><Fit text="wa" :w="12" :size="9" :hgt="11" bold /></span>
            </div>
            <div class="lrow">
              <i class="branch last"></i><svg class="chk" viewBox="0 0 9 9"><path d="M1.500 1.500l6 6M7.500 1.500l-6 6" stroke="#000" stroke-width="2.300" /></svg>
              <i class="sw sand"></i><span class="lname cur"><Fit text="20150101-水域" :w="67" :size="9.500" :hgt="10" bold underline /></span>
            </div>
          </div>
        </aside>
        <div class="canvas">
          <svg class="map" viewBox="225 123 745 599" fill="none" stroke="#0b0f0c" stroke-linejoin="round">
            <path :d="specks" stroke-width="1.300" />
            <path :d="grid" stroke="#17170c" stroke-width="1.300" />
            <g v-for="s in drawn" :key="s.t" :transform="s.t">
              <path :d="s.thin" stroke-width="3" stroke="#1a190d" />
              <path :d="s.wavy" stroke-width="3.400" />
              <path :d="s.bold" stroke-width="5" />
            </g>
            <g transform="translate(325 225) scale(.33333)">
              <path :d="mainRiver" stroke-width="21" />
              <path :d="mainRiver" stroke-width="15" stroke="#07668e" />
              <path d="M501 70h24l6 38-14 4z" fill="#07668e" stroke-width="2.500" />
              <path d="M580 520l12-24v54z" fill="#07668e" stroke-width="2.500" />
              <path d="M597 502l-3 30 7 6z" fill="#d6be69" stroke-width="2.500" />
              <path d="M512 118l16 8M484 205h20M468 272l18 8M440 340h24M520 340v20M570 342v22M628 362l-4 18M682 360v18M622 432l10 20M588 610h22M592 540h22M672 415v12" stroke-width="2.500" />
              <path d="M462 365l14 8M430 345l20 12" stroke-width="5" />
              <path :d="westRiver" stroke-width="10.500" />
              <path :d="westRiver" stroke-width="3.500" stroke="#07668e" />
              <path d="M60 397Q80 400 72 430V475" stroke-width="9" />
              <path d="M418 268l12 18-8 20 18 30M425 310l12 24" stroke-width="5.500" />
              <path d="M465 518h10v10h-10z" fill="#111" />
              <path d="M180 570l-6 10M185 500l2 60" stroke-width="4" />
            </g>
            <g transform="translate(325 400) scale(.33333)">
              <path :d="delta" fill="#07668e" stroke-width="3.500" />
              <path d="M203 110v25M255 107v22M304 103v22M588 116l-8-26 6-16M590 90h20" stroke-width="4" />
            </g>
            <g transform="translate(560 225) scale(.33333)">
              <path :d="eastRiver" stroke-width="11" />
              <path :d="eastRiver" stroke-width="4.500" stroke="#07668e" />
              <path :d="lake" fill="#07668e" stroke-width="3.500" />
              <path d="M352 485v132M406 446v178M459 452v183M513 470v65M566 472v76M360 472h190M570 472h38M325 541h170M510 541h70M290 610h225" stroke="#06202c" stroke-width="3.800" />
              <path d="M470 566l14-4 6 8-4 6 4 10-8 0-4-10-8-4z" fill="#fff" stroke-width="2" />
            </g>
            <path d="M662 522l4-4 2 3 3 2-4 3-3-1z" fill="#fff" stroke-width=".7" />
          </svg>
        </div>
      </div>

      <footer class="status">
        <Fit class="upd" text="更新されたプラグインが使用可能です" :w="132" :size="10.500" color="#1111ee" underline />
        <span class="plug"><svg viewBox="0 0 14 14"><path d="M2 12q4-1 6-5M3 3l7 9M5 2l6 7M2 5l5 6" stroke="#333" stroke-width="1.300" fill="none" /><circle cx="9" cy="5" r="2.800" fill="#bbb" stroke="#333" /></svg></span>
        <Fit class="l1" text="座標:" :w="20" :size="10" />
        <span class="field coord"><Fit text="40627,-163392" :w="56" :size="9.500" /></span>
        <Fit class="l2" text="縮尺" :w="18" :size="10" />
        <span class="field scale"><Fit text="1:117,020" :w="36" :size="9.500" /><i class="dd"></i></span>
        <Fit class="l3" text="回転:" :w="20" :size="10" />
        <span class="field rot"><Fit text="0.0" :w="12" :size="9.500" /><i class="spin"><b class="up"></b><b class="dn"></b></i></span>
        <svg class="chk big" viewBox="0 0 9 9"><path d="M1.500 1.500l6 6M7.500 1.500l-6 6" stroke="#000" stroke-width="2.300" /></svg>
        <Fit text="レンダ" :w="20" :size="10" />
        <svg class="crs" viewBox="0 0 14 14"><circle cx="7" cy="7" r="4.500" fill="#bbb" stroke="#333" stroke-width="2" /><path d="M7 0v14M0 7h14" stroke="#333" stroke-width="1.400" /><circle cx="7" cy="7" r="2" fill="#ddd" /></svg>
        <Fit text="USER:100006 (OTF)" :w="77" :size="10" />
        <svg class="bub" viewBox="0 0 14 14"><path d="M7 1.500c3.500 0 6 2 6 4.500 0 1.700-1 3-2.600 3.800l1.100 3.200-3.500-2.700C4 10.500 1 8.500 1 6c0-2.500 2.500-4.500 6-4.500z" fill="#6b6b6b" /></svg>
      </footer>
    </div>

    <section class="attr">
      <div class="atitle">
        <svg viewBox="0 0 20 20" v-html="logo"></svg>
        <Fit text="Attribute table - wa :: Fea" :w="238" :size="18.500" :hgt="26" color="#10182e" family="'DejaVu Sans', sans-serif" />
      </div>
      <div class="aframe"></div>
      <div class="acontent">
        <div class="atools">
          <svg class="ai pen" viewBox="0 0 20 20" v-html="icons.pencil"></svg>
          <svg class="ai flop" viewBox="0 0 20 20" v-html="icons.savee"></svg>
          <i class="asep"></i>
          <svg class="ai bin" viewBox="0 0 20 20" v-html="icons.trash"></svg>
          <i class="asep"></i>
          <svg class="ai eps" viewBox="0 0 20 20" v-html="icons.expr"></svg>
          <svg class="ai des" viewBox="0 0 20 20" v-html="icons.desel"></svg>
        </div>
        <div class="agrid">
          <div class="arow ahead">
            <span class="rh"></span>
            <span class="ch"><Fit text="1" :w="7" :size="18" :hgt="24" :heavy=".5" /><svg class="sort" viewBox="0 0 18 14"><path d="M1 1.500h16" stroke="#bbb" stroke-width="2" /><path d="M1 2l8.500 11" stroke="#999" stroke-width="1.300" /><path d="M17 2l-7.500 11" stroke="#fff" stroke-width="1.300" /></svg></span>
            <span class="rest"></span>
          </div>
          <div v-for="r in tableRows" :key="r[0]" class="arow">
            <span class="rh"><Fit :text="r[0]" :w="8" :size="18.500" :hgt="24" :heavy=".4" /></span>
            <span class="cell"><Fit :text="r[1]" :w="8" :size="17.500" :hgt="18" :heavy=".5" /></span>
          </div>
          <div class="gutter"></div>
        </div>
      </div>
    </section>
  </div>
</template>

<style>
body { background: #fff; overflow: hidden; }
</style>

<style scoped>
* { box-sizing: border-box; }
i { font-style: normal; display: block; flex: none; }
.page { position: relative; width: 1226px; height: 746px; overflow: hidden; background: #fff; font-family: 'Liberation Sans', 'Noto Sans CJK JP', sans-serif; }
.main { width: 971px; height: 746px; background: #f0f0f0; display: flex; flex-direction: column; }
.title { height: 17px; flex: none; display: flex; align-items: center; border-bottom: 1px solid #5d7fae; background: linear-gradient(90deg, #7ba3d5 0, #6f9ad2 90px, #2a62b0 135px, #114da8 200px, #114da8 410px, #2560b5 430px, #1c57b0 490px, #0f4ba6 530px, #0f4ba6 740px, #3a74be 880px, #5b8fce 971px); }
.mini { width: 13px; height: 13px; margin-left: 0; }
.glow { margin-left: 3px; border-radius: 8px; background: rgba(190, 212, 240, .35); box-shadow: 0 0 7px 5px rgba(190, 212, 240, .35); }
.wbtns { margin-left: auto; margin-right: 2px; display: flex; align-self: flex-start; height: 14px; border: 1px solid #26406b; border-top: 0; border-radius: 0 0 4px 4px; overflow: hidden; }
.wb { width: 22px; height: 13px; border-right: 1px solid #26406b; background: linear-gradient(#a9c2de, #5379ab 50%, #7c9fca); display: flex; justify-content: center; }
.wb svg { width: 20px; height: 12px; }
.wb.mid { width: 20px; }
.wb.close { width: 35px; border: 0; background: linear-gradient(#d49686, #b7331e 50%, #c75841); }
.wb.close svg { width: 30px; }
.menu { height: 16px; flex: none; display: flex; align-items: center; gap: 11.400px; padding-left: 7px; background: #f5f5f5; border-bottom: 1px solid #ddd; }
.bar { display: flex; align-items: center; flex: none; border-bottom: 1px solid #c3c3c3; background: #f0f0f0; border-top: 1px solid #fafafa; }
.bar1 { height: 30px; }
.bar2 { height: 29px; }
.bar3 { height: 30px; border-bottom-color: #d8d8d8; }
.grp { display: flex; align-items: center; }
.grip { width: 5px; height: 22px; margin-right: 2px; background-image: radial-gradient(circle at 1px 1px, #b9b9b9 .8px, transparent 1.100px), radial-gradient(circle at 3.500px 3px, #b9b9b9 .8px, transparent 1.100px); background-size: 5px 4px; }
.slot { width: 26.600px; height: 26px; flex: none; display: flex; align-items: center; justify-content: center; }
.slot svg { width: 20px; height: 20px; overflow: visible; flex: none; }
.bar2 .slot svg, .bar3 .slot svg { width: 19px; height: 19px; }
.s-pan { border: 1px solid #8e8e8e; border-radius: 2px; background: #d6d6d6; }
.s-tri, .s-trig { width: 9.500px; }
.bar3 .s-tri { width: 8px; margin-right: 1px; }
.s-sep { width: 1px; margin: 0 1px 0 2px; background: #b9b9b9; }
.g-a { margin-left: 2px; }
.bar1 .g-b { margin-left: 4px; }
.bar1 .g-c { margin-left: 2.500px; }
.bar1 .g-c .slot:not(.s-tri):not(.s-trig) { width: 26.400px; }
.bar1 .g-d { margin-left: 4.500px; }
.bar2 .g-b { margin-left: 28px; }
.g-m { margin-left: 9px; }
.bar2 .g-c { margin-left: -5px; }
.bar2 .g-d { margin-left: 4px; }
.bar2 .g-e { margin-left: 6px; }
.bar3 .g-b { margin-left: auto; margin-right: 1px; }
.body { flex: 1; display: flex; min-height: 0; }
.dock { width: 219px; margin-right: 5px; display: flex; flex-direction: column; }
.dhead { height: 13px; display: flex; align-items: center; }
.dots { height: 6px; width: 82px; margin: 0 3px; background-image: radial-gradient(circle at 1px 1px, #bdbdbd .8px, transparent 1.100px), radial-gradient(circle at 3px 4px, #bdbdbd .8px, transparent 1.100px); background-size: 4px 6px; }
.dbtn { width: 11px; height: 11px; border: 1px solid #777; border-radius: 2px; margin-left: 1px; display: flex; background: #f6f6f6; }
.dbtn svg { width: 9px; height: 9px; }
.dtools { height: 26px; display: flex; align-items: center; gap: 9.400px; padding: 0 0 4px 5px; margin-bottom: -1px; }
.dtools svg { width: 15px; height: 15px; overflow: visible; }
.tree { flex: 1; background: #fff; border: 2px solid #55a3ec; border-radius: 2px; border-left-width: 1px; border-right-width: 1px; }
.lrow { display: flex; align-items: center; height: 12px; }
.branch { width: 9px; height: 12px; margin-left: 8px; border-left: 1px dotted #aaa; background: linear-gradient(90deg, #bbb 50%, transparent 0) 0 6px / 2px 1px repeat-x; }
.branch.last { height: 7px; align-self: flex-start; }
.chk { width: 9px; height: 9px; margin-left: 1px; flex: none; background: #fff; border: 1px solid #ddd; }
.sw { width: 12px; height: 12px; margin-left: 5px; }
.blue { background: #07668e; }
.sand { background: #d6be69; }
.lname { margin-left: 3px; padding-left: 1px; height: 12px; flex: 1; border: 1px solid transparent; display: flex; align-items: center; }
.cur { border: 1px dotted #333; }
.canvas { width: 747px; background: #d6be69; border: 1px solid #aaa69a; }
.map { display: block; width: 745px; height: 599px; margin-top: -1px; }
.status { height: 24px; flex: none; display: flex; align-items: center; }
.upd { margin-left: 169px; }
.plug { width: 14px; height: 14px; border: 1px solid #999; margin-left: 8px; border-radius: 2px; display: flex; background: #e6e6e6; }
.plug svg { width: 12px; height: 12px; }
.l1 { margin-left: 8px; }
.field { height: 15px; background: #fff; border: 1px solid #bdbdbd; border-radius: 2px; display: flex; align-items: center; flex: none; }
.coord { width: 223px; margin-left: 6px; justify-content: center; }
.l2 { margin-left: 6px; }
.scale { width: 64px; margin-left: 7px; padding-left: 4px; }
.dd { margin-left: auto; width: 12px; height: 13px; border-left: 1px solid #ccc; display: flex; align-items: center; justify-content: center; }
.dd::after { content: ''; border: 3px solid transparent; border-top: 4px solid #111; border-bottom: 0; }
.l3 { margin-left: 6px; }
.rot { width: 75px; margin-left: 7px; height: 18px; padding-left: 2px; }
.spin { margin-left: auto; width: 11px; height: 16px; border-left: 1px solid #bbb; display: flex; flex-direction: column; align-items: center; justify-content: space-evenly; background: linear-gradient(#f4f4f4 7.500px, #bbb 7.500px, #bbb 8.500px, #f4f4f4 8.500px); }
.up { border: 2.500px solid transparent; border-top: 0; border-bottom: 3px solid #111; }
.dn { border: 2.500px solid transparent; border-bottom: 0; border-top: 3px solid #111; }
.big { margin: 0 5px 0 5px; }
.crs { width: 13px; height: 13px; margin: 0 2px 0 13px; }
.bub { width: 14px; height: 14px; margin-left: 17px; }

.attr { position: absolute; left: 941px; top: 422px; width: 285px; height: 287px; border: 2px solid #141a24; border-bottom: 0; border-right: 0; border-top-left-radius: 9px; overflow: hidden; display: grid; grid-template-columns: 10px 1fr; grid-template-rows: 44px 1fr; background: #fff; }
.atitle { grid-column: 1 / 3; display: flex; align-items: center; padding-left: 10px; border-top: 1px solid #d9e7f7; border-left: 1px solid #d9e7f7; background: linear-gradient(180deg, rgba(255, 255, 255, .12), transparent 45%, rgba(20, 60, 130, .12)), linear-gradient(90deg, #6d96cd 0, #86a8d9 22px, #a3bfe4 60px, #a9c3e6 160px, #6e97d0 260px, #5b88c8 300px); }
.atitle svg:first-child { width: 22px; height: 22px; margin-right: 10px; flex: none; }
.aframe { background: linear-gradient(#6e96cd 0, #86a9d8 70px, #b9d0ea 130px, #dfe9f4 180px, #cbdbec 220px, #1f5cb4 221px, #1f5cb4 100%); border-right: 2px solid #27406a; border-left: 1px solid #cddff2; }
.acontent { background: #fff; border-top: 2px solid #27406a; display: flex; flex-direction: column; min-width: 0; }
.atools { height: 54px; display: flex; align-items: center; background: #f0f0f0; border-left: 1px solid #fff; border-bottom: 2px solid #c4c4c4; }
.ai { width: 28px; height: 28px; flex: none; }
.pen { width: 31px; height: 30px; margin-left: 10px; margin-top: -3px; }
.flop { margin-left: 19px; margin-right: 13px; }
.asep { width: 2px; height: 42px; background: linear-gradient(90deg, #999 50%, #fff 50%); }
.bin { margin: 0 13px 0 15px; }
.eps { margin-left: 17px; }
.des { margin-left: 22px; }
.agrid { flex: 1; border-left: 2px solid #c4c4c4; margin-left: 1px; display: flex; flex-direction: column; }
.arow { display: flex; height: 31.300px; flex: none; }
.rh { width: 24px; border: 2px solid #8f8f8f; border-left-width: 1px; background: linear-gradient(#fbfbfb, #e8e8e8); display: flex; align-items: center; justify-content: center; border-top-width: 1px; }
.ch { width: 156px; border: 2px solid #8f8f8f; border-left: 0; border-right-width: 1px; border-top-width: 1px; background: linear-gradient(#f9f9f9, #e6e6e6); display: flex; align-items: center; padding-left: 61px; }
.sort { width: 18px; height: 14px; margin: 0 0 3px 60px; flex: none; }
.rest { flex: 1; background: #f0f0f0; }
.cell { width: 156px; border-bottom: 1.500px solid #999; border-right: 1.500px solid #999; display: flex; justify-content: flex-end; padding-right: 6px; }
.arow:nth-child(3) .cell { background: #f5f5f5; }
.gutter { flex: 1; width: 23px; background: #f0f0f0; }
</style>
